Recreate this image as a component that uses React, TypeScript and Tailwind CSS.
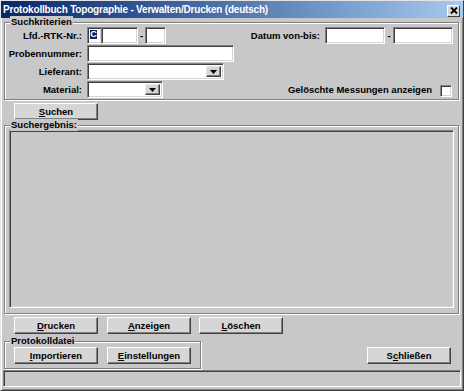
import React from "react";

const font = { fontFamily: '"Liberation Sans", Arial, sans-serif' };

function Btn({ children, className = "" }: { children: React.ReactNode; className?: string }) {
  return (
    <div
      className={
        "flex h-[17px] w-[84px] shrink-0 items-center justify-center border border-t-white border-l-white border-r-[#404040] border-b-[#404040] bg-[#d6d6d6] shadow-[inset_-1px_-1px_0_#808080] text-[9.5px] font-bold leading-none text-black " +
        className
      }
    >
      {children}
    </div>
  );
}

const sunken =
  "shrink-0 border border-t-[#808080] border-l-[#808080] border-b-white border-r-white bg-white shadow-[inset_1px_1px_0_#404040,inset_-1px_-1px_0_#d4d4d4]";

function Input({ className = "", children }: { className?: string; children?: React.ReactNode }) {
  return <div className={"h-[17px] " + sunken + " " + className}>{children}</div>;
}

function Combo({ className = "" }: { className?: string }) {
  return (
    <div className={"flex h-[17px] justify-end p-[2px] " + sunken + " " + className}>
      <div className="flex w-[15px] items-center justify-center border border-t-[#e8e8e8] border-l-[#e8e8e8] border-r-[#404040] border-b-[#404040] bg-[#d6d6d6] shadow-[inset_-1px_-1px_0_#808080]">
        <svg width="7" height="4" viewBox="0 0 7 4">
          <path d="M0 0H7L3.5 4Z" fill="#000" />
        </svg>
      </div>
    </div>
  );
}

function Group({
  label,
  className = "",
  children,
}: {
  label: string;
  className?: string;
  children?: React.ReactNode;
}) {
  return (
    <div className={"relative border border-[#808080] shadow-[inset_1px_1px_0_#fff,1px_1px_0_#fff] " + className}>
      <span className="absolute left-[5px] top-[-7px] bg-[#c8c8c8] px-[1px] text-[9.5px] font-bold leading-[12px] text-black">
        {label}
      </span>
      {children}
    </div>
  );
}

const lbl = "w-[77px] shrink-0 text-right text-[9.5px] font-bold leading-[17px] text-black";

export default function App() {
  return (
    <div
      style={font}
      className="flex h-[391px] w-[464px] flex-col overflow-hidden border border-t-[#e4e4e4] border-l-[#e4e4e4] border-r-[#404040] border-b-[#404040] bg-[#c8c8c8] shadow-[inset_1px_1px_0_#fff,inset_-1px_-1px_0_#808080]"
    >
      {/* title bar */}
      <div className="flex h-[17px] shrink-0 items-center bg-gradient-to-r from-[#0a246a] to-[#a6caf0] pl-[2px] pr-[3px]">
        <span className="text-[10px] font-bold leading-none tracking-[-0.2px] text-white">
          Protokollbuch Topographie - Verwalten/Drucken (deutsch)
        </span>
        <div className="ml-auto mt-[2px] flex h-[12px] w-[13px] items-center justify-center border border-t-white border-l-white border-r-[#404040] border-b-[#404040] bg-[#d6d6d6]">
          <svg width="8" height="7" viewBox="0 0 8 7">
            <path d="M1 0.5L7 6.5M7 0.5L1 6.5" stroke="#000" strokeWidth="1.8" />
          </svg>
        </div>
      </div>

      {/* body */}
      <div className="flex flex-1 flex-col pl-[3px] pr-[4px]">
        <Group label="Suchkriterien" className="mt-[4px] flex flex-col gap-[1px] pb-[1px] pr-[5px] pt-[4px]">
          {/* row 1 */}
          <div className="flex h-[17px] items-center">
            <div className={lbl}>Lfd.-RTK-Nr.:</div>
            <Input className="ml-[5px] w-[15px] !p-[2px]">
              <div className="flex h-[9px] w-[7px] items-center justify-center bg-[#0a246a] text-[9px] font-bold leading-none text-white">
                C
              </div>
            </Input>
            <Input className="-ml-[1px] w-[37px]" />
            <div className="w-[7px] text-center text-[9.5px] font-bold leading-[17px]">-</div>
            <Input className="w-[21px]" />
            <div className="ml-auto text-[9.5px] font-bold leading-[17px]">Datum von-bis:</div>
            <Input className="ml-[5px] w-[60px]" />
            <div className="w-[8px] text-center text-[9.5px] font-bold leading-[17px]">-</div>
            <Input className="w-[60px]" />
          </div>
          {/* row 2 */}
          <div className="flex h-[17px] items-center">
            <div className={lbl}>Probennummer:</div>
            <Input className="ml-[5px] w-[147px]" />
          </div>
          {/* row 3 */}
          <div className="flex h-[17px] items-center">
            <div className={lbl}>Lieferant:</div>
            <Combo className="ml-[5px] w-[137px]" />
          </div>
          {/* row 4 */}
          <div className="flex h-[17px] items-center">
            <div className={lbl}>Material:</div>
            <Combo className="ml-[5px] w-[76px]" />
            <div className="ml-auto text-[9.5px] font-bold leading-[17px]">Gelöschte Messungen anzeigen</div>
            <div className={"ml-[8px] mr-[1px] mt-[2px] h-[12px] w-[12px] " + sunken} />
          </div>
        </Group>

        <Btn className="ml-[10px] mt-[3px]">
          <span>
            <span className="underline">S</span>uchen
          </span>
        </Btn>

        <Group label="Suchergebnis:" className="mt-[5px] flex h-[189px] shrink-0 px-[4px] pb-[5px] pt-[4px]">
          <div className="flex-1 border border-t-[#808080] border-l-[#808080] border-b-white border-r-white bg-[#c8c8c8] shadow-[inset_1px_1px_0_#404040,inset_-1px_-1px_0_#d4d4d4]" />
        </Group>

        <div className="mt-[3px] flex">
          <Btn className="ml-[10px]">
            <span>
              <span className="underline">D</span>rucken
            </span>
          </Btn>
          <Btn className="ml-[9px]">
            <span>
              <span className="underline">A</span>nzeigen
            </span>
          </Btn>
          <Btn className="ml-[8px]">
            <span>
              <span className="underline">L</span>öschen
            </span>
          </Btn>
        </div>

        <div className="mt-[7px] flex">
          <Group label="Protokolldatei" className="flex h-[28px] w-[197px] pl-[9px] pt-[5px]">
            <Btn>
              <span>
                <span className="underline">I</span>mportieren
              </span>
            </Btn>
            <Btn className="ml-[9px]">
              <span>
                <span className="underline">E</span>instellungen
              </span>
            </Btn>
          </Group>
          <Btn className="ml-auto mr-[8px] mt-[6px]">
            <span>
              S<span className="underline">c</span>hließen
            </span>
          </Btn>
        </div>

        <div className="-ml-[1px] -mr-[2px] mt-[1px] h-[17px] border border-t-[#808080] border-l-[#808080] border-b-white border-r-white shadow-[inset_1px_1px_0_#404040]" />
      </div>
    </div>
  );
}
